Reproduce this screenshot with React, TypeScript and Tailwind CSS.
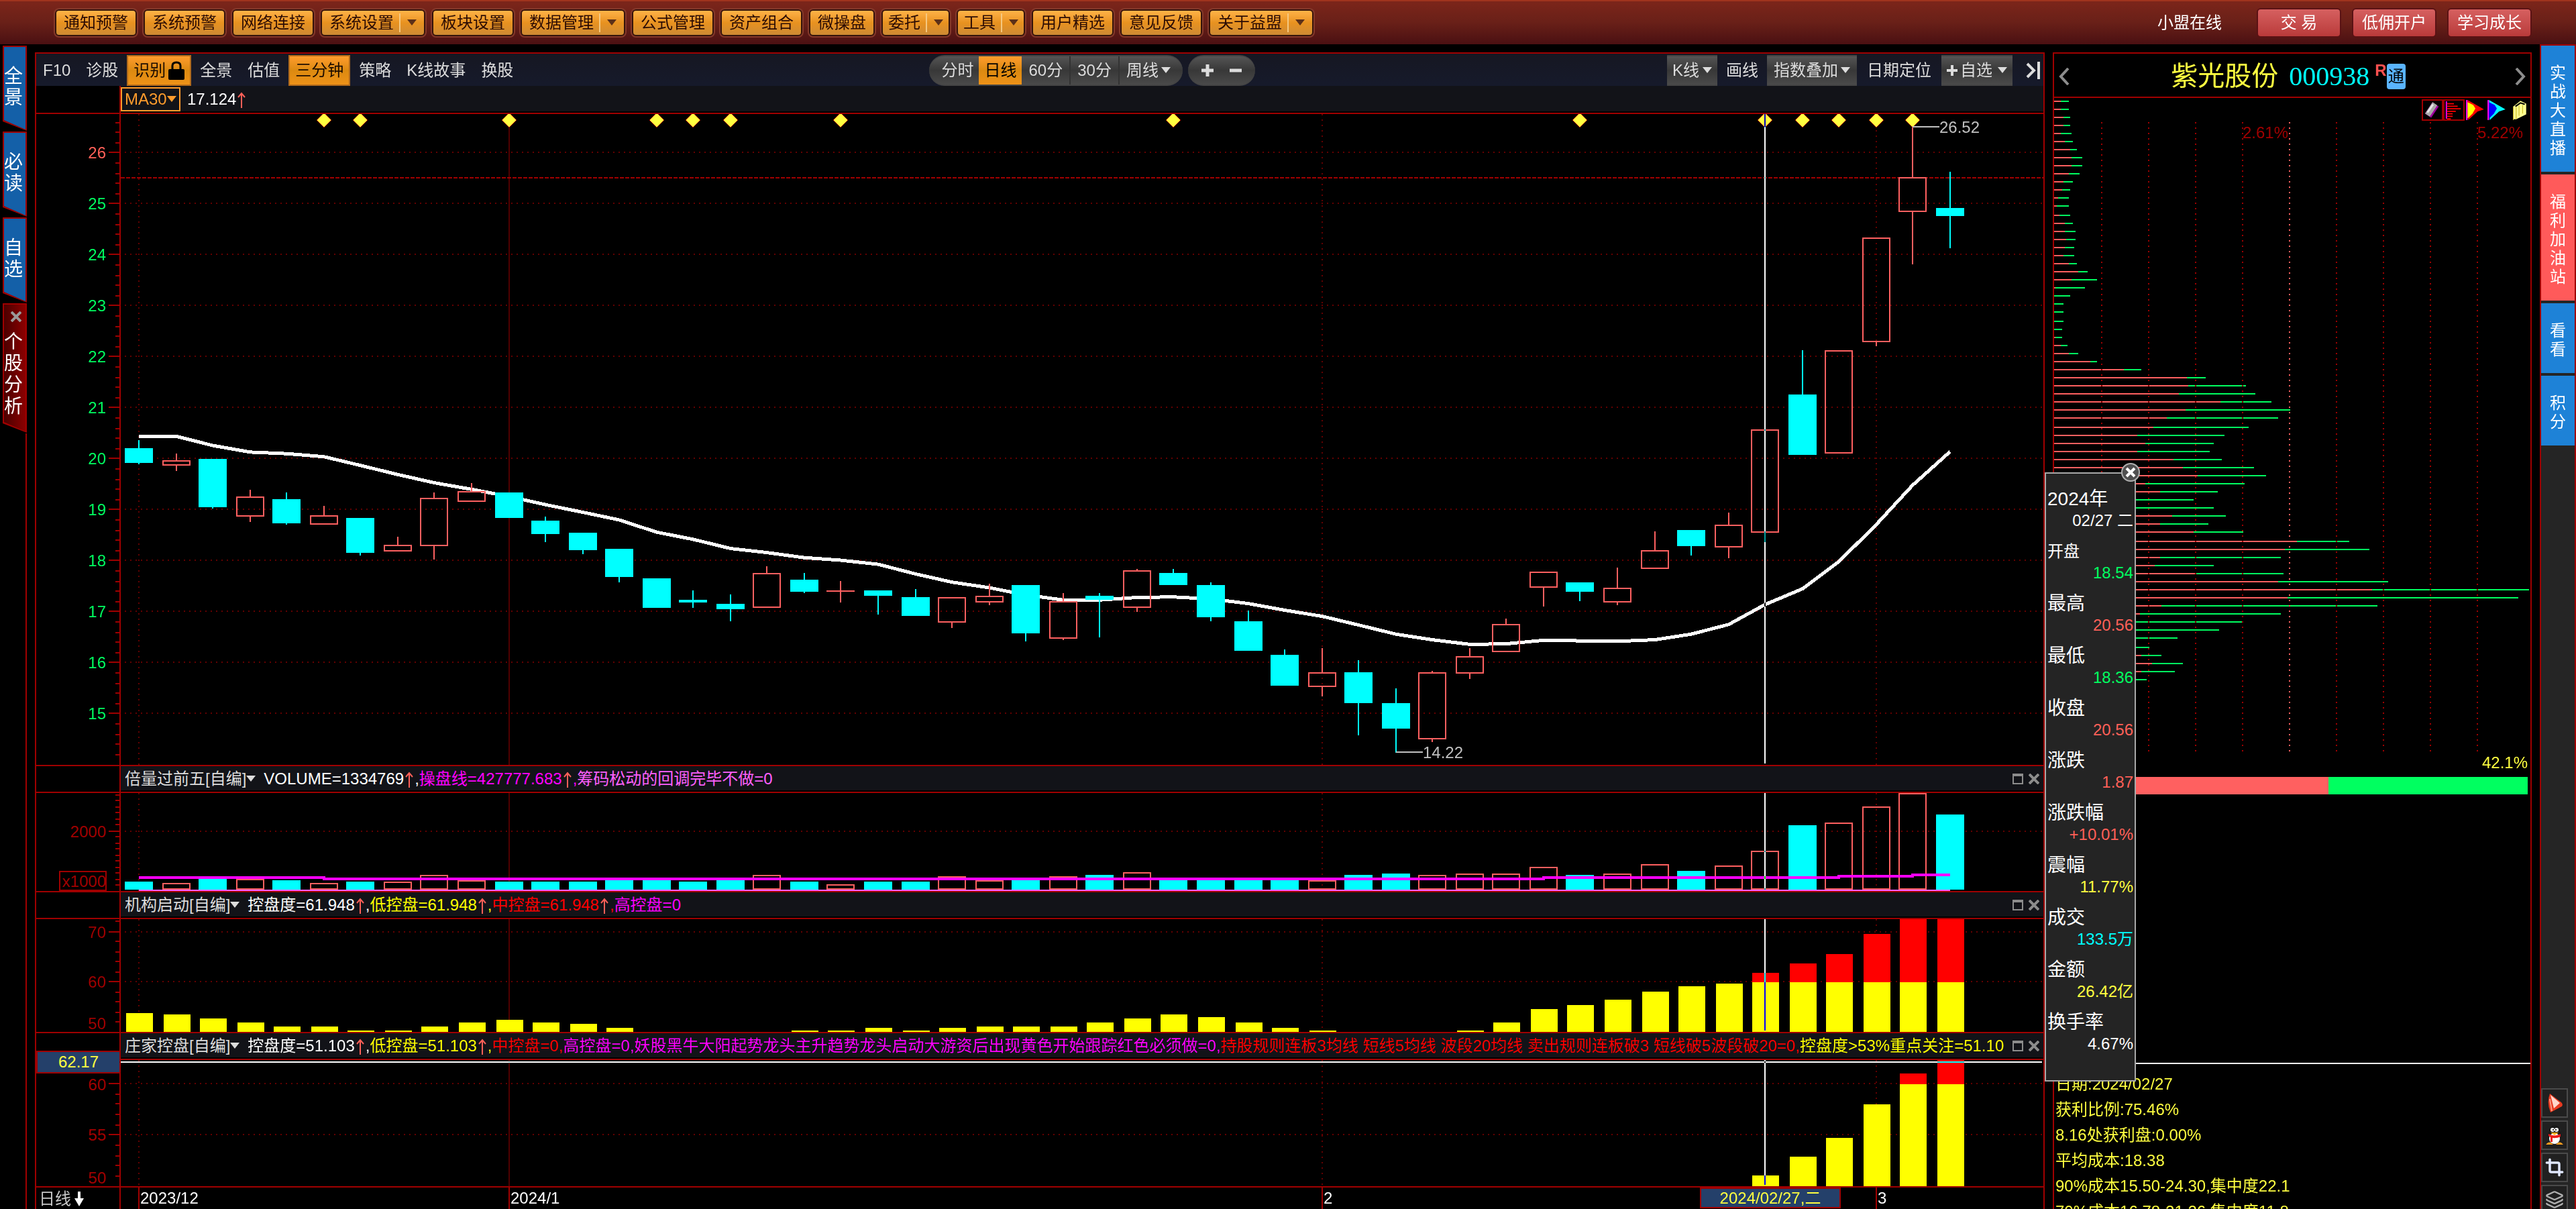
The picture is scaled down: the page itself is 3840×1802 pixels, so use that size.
import { FC, ReactNode } from "react";
import clsx from "clsx";
import { Crop, Layers } from "lucide-react";

type Candle = [high: number, top: number, bottom: number, low: number, up: 0 | 1];

const candles: Candle[] = [
  [20.35, 20.2, 19.91, 19.88, 0],
  [20.09, 19.95, 19.86, 19.75, 1],
  [19.99, 19.99, 19.04, 19.02, 0],
  [19.38, 19.25, 18.86, 18.75, 1],
  [19.33, 19.2, 18.72, 18.7, 0],
  [19.07, 18.88, 18.7, 18.7, 1],
  [18.83, 18.83, 18.15, 18.09, 0],
  [18.46, 18.3, 18.17, 18.17, 1],
  [19.33, 19.22, 18.28, 18.01, 1],
  [19.51, 19.35, 19.15, 19.15, 1],
  [19.33, 19.33, 18.83, 18.83, 0],
  [18.86, 18.78, 18.51, 18.36, 0],
  [18.54, 18.54, 18.2, 18.12, 0],
  [18.23, 18.23, 17.67, 17.57, 0],
  [17.64, 17.64, 17.06, 17.06, 0],
  [17.41, 17.22, 17.17, 17.06, 0],
  [17.33, 17.14, 17.04, 16.8, 0],
  [17.88, 17.75, 17.06, 17.06, 1],
  [17.75, 17.62, 17.38, 17.36, 0],
  [17.59, 17.4, 17.38, 17.17, 1],
  [17.41, 17.41, 17.3, 16.93, 0],
  [17.44, 17.28, 16.91, 16.91, 0],
  [17.27, 17.27, 16.78, 16.67, 1],
  [17.54, 17.3, 17.17, 17.12, 1],
  [17.51, 17.51, 16.57, 16.41, 0],
  [17.36, 17.19, 16.46, 16.43, 1],
  [17.36, 17.3, 17.22, 16.49, 0],
  [17.83, 17.8, 17.06, 16.98, 1],
  [17.83, 17.75, 17.51, 17.51, 0],
  [17.57, 17.51, 16.88, 16.8, 0],
  [17.01, 16.8, 16.22, 16.22, 0],
  [16.25, 16.14, 15.54, 15.54, 0],
  [16.28, 15.8, 15.51, 15.33, 1],
  [16.04, 15.8, 15.2, 14.56, 0],
  [15.49, 15.2, 14.7, 14.22, 0],
  [15.83, 15.8, 14.49, 14.43, 1],
  [16.28, 16.12, 15.78, 15.67, 1],
  [16.85, 16.75, 16.2, 16.2, 1],
  [17.77, 17.77, 17.46, 17.09, 1],
  [17.57, 17.57, 17.38, 17.2, 0],
  [17.85, 17.45, 17.17, 17.12, 1],
  [18.56, 18.19, 17.84, 17.84, 1],
  [18.59, 18.59, 18.28, 18.09, 0],
  [18.94, 18.69, 18.25, 18.04, 1],
  [20.56, 20.56, 18.54, 18.36, 1],
  [22.13, 21.25, 20.06, 20.06, 0],
  [22.11, 22.11, 20.1, 20.1, 1],
  [24.32, 24.32, 22.28, 22.2, 1],
  [26.52, 25.51, 24.83, 23.8, 1],
  [25.62, 24.91, 24.75, 24.12, 0]
];

const ma30 = [
  20.43, 20.43, 20.25, 20.12, 20.09, 20.03, 19.86, 19.68, 19.52, 19.39, 19.25,
  19.09, 18.94, 18.79, 18.55, 18.41, 18.23, 18.15, 18.05, 18.0, 17.92, 17.73,
  17.57, 17.46, 17.32, 17.22, 17.22, 17.27, 17.28, 17.24, 17.15, 17.02, 16.9,
  16.73, 16.55, 16.44, 16.35, 16.36, 16.43, 16.42, 16.41, 16.44, 16.55, 16.74,
  17.13, 17.44, 17.97, 18.7, 19.47, 20.13
];

const volumes = [
  318, 270, 404, 404, 356, 270, 318, 318, 539, 366, 318, 318, 318, 356, 356,
  318, 356, 539, 318, 221, 318, 318, 491, 340, 356, 491, 539, 626, 356, 356,
  356, 356, 366, 539, 587, 539, 587, 587, 809, 539, 587, 895, 674, 857, 1334,
  2205, 2292, 2831, 3290, 2562
];

const launch = [
  53.9, 53.6, 52.6, 52, 51.2, 51, 50.4, 50.2, 51, 52, 52.3, 51.8, 51.5, 50.7,
  0, 0, 0, 0, 50.2, 50.4, 50.7, 50.4, 50.7, 51.2, 51, 51.2, 51.8, 52.8, 53.4,
  53.1, 52, 50.7, 50.2, 0, 0, 0, 50.2, 51.8, 54.7, 55.5, 56.4, 58, 59.1, 59.6,
  62, 63.9, 65.8, 69.6, 74, 74
];

const control = volumes.map((_, i) =>
  i < 44 ? 0 : [51.1, 52.9, 54.8, 58, 61, 64][i - 44]
);

const signals = [5, 6, 10, 14, 15, 16, 19, 28, 39, 44, 45, 46, 47, 48];

// profit / total length of every price level, top to bottom
const chips = [
  [10, 22], [10, 22], [14, 24], [14, 24], [10, 26], [16, 28], [24, 34],
  [26, 42], [26, 42], [22, 38], [14, 28], [12, 24], [6, 22], [4, 22], [8, 24],
  [16, 28], [16, 32], [18, 32], [16, 30], [14, 30], [22, 34], [36, 50],
  [26, 64], [2, 46], [0, 24], [0, 14], [0, 14], [0, 14], [0, 12], [2, 12],
  [10, 20], [22, 36], [54, 64], [104, 130], [198, 226], [200, 286], [186, 300],
  [248, 324], [196, 352], [168, 334], [148, 290], [124, 254], [136, 238],
  [124, 232], [178, 250], [192, 298], [214, 316], [136, 284], [158, 244],
  [100, 208], [100, 238], [176, 256], [158, 230], [208, 282], [362, 440],
  [344, 470], [158, 338], [150, 238], [212, 342], [334, 498], [474, 708],
  [348, 692], [160, 482], [128, 338], [110, 280], [110, 246], [100, 184],
  [90, 142], [130, 160], [146, 192], [130, 180], [80, 138]
];

const months = [
  { i: 0, label: "2023/12" },
  { i: 10, label: "2024/1", solid: true },
  { i: 32, label: "2" },
  { i: 47, label: "3" }
];

const CHART_W = 2992;
const AXIS = 125;
const CURSOR = 44;

const even = (n: number) => 2 * Math.round(n / 2);
const cx = (i: number) => 153 + even(55.1 * i);

interface MenuItem {
  label: string;
  menu?: boolean;
}

const menuItems: MenuItem[] = [
  { label: "通知预警" },
  { label: "系统预警" },
  { label: "网络连接" },
  { label: "系统设置", menu: true },
  { label: "板块设置" },
  { label: "数据管理", menu: true },
  { label: "公式管理" },
  { label: "资产组合" },
  { label: "微操盘" },
  { label: "委托", menu: true },
  { label: "工具", menu: true },
  { label: "用户精选" },
  { label: "意见反馈" },
  { label: "关于益盟", menu: true }
];

const Triangle: FC<{ className?: string }> = ({ className }) => (
  <svg viewBox="0 0 14 10" className={clsx("h-2.5 w-3.5 shrink-0", className)} aria-hidden>
    <path d="M0 0h14l-7 9z" fill="currentColor" />
  </svg>
);

const TopBar: FC = () => (
  <header className="flex h-[66px] shrink-0 items-center justify-between border-t-2 border-[#a0341e] bg-linear-to-b from-[#7c251a] via-[#692018] to-[#4a1012] pr-[66px] pl-[82px]">
    <nav className="flex gap-2.5">
      {menuItems.map(({ label, menu }) => (
        <button
          key={label}
          className={clsx(
            "flex h-10 items-center rounded-md border-2 border-[#35140a] bg-linear-to-b from-[#ffb347] via-[#e8921f] to-[#cd8a33] text-[#2a0b04] outline-2 outline-[#84382a]",
            label.length === 2 ? "px-2" : "px-[11px]"
          )}
          aria-haspopup={menu ? "menu" : undefined}
        >
          {label}
          {menu && (
            <>
              <span className="ml-2 h-7 w-0.5 bg-[#f5c880]" />
              <Triangle className="ml-2.5 text-[#5c3018]" />
            </>
          )}
        </button>
      ))}
    </nav>
    <div className="flex items-center gap-4">
      <a href="#online" className="mr-9 text-white">
        小盟在线
      </a>
      {["交 易", "低佣开户", "学习成长"].map((label) => (
        <button
          key={label}
          className="h-[44px] w-[126px] rounded-md border-2 border-[#5a1214] bg-linear-to-b from-[#d66060] to-[#b93a3a] text-white"
        >
          {label}
        </button>
      ))}
    </div>
  </header>
);

const slant =
  "[clip-path:polygon(0_0,100%_0,100%_100%,0_calc(100%-14px))]";

const LeftTabs: FC = () => (
  <aside className="flex w-10 shrink-0 flex-col gap-px pt-0.5 pl-1">
    {["全景", "必读", "自选"].map((label) => (
      <button key={label} className={clsx("h-[127px] bg-[#a00000] p-0.5", slant)}>
        <span className={clsx("flex h-full justify-center bg-[#1460a8] pt-7 text-[28px] leading-8 text-white", slant)}>
          <span className="-ml-1 w-7 break-all">{label}</span>
        </span>
      </button>
    ))}
    <div className={clsx("h-[193px] bg-[#a00000] p-0.5", slant)}>
      <div className={clsx("flex h-full flex-col items-center bg-linear-to-r from-[#4c0000] to-[#8c0000] pt-2.5", slant)}>
        <button aria-label="关闭" className="pl-1 text-[#9a9a9a]">
          <svg viewBox="0 0 16 16" className="size-4">
            <path d="M1 1l14 14M15 1L1 15" stroke="currentColor" strokeWidth="4" />
          </svg>
        </button>
        <button className="mt-3.5 -ml-1 w-7 text-[28px] leading-8 break-all text-white">
          个股分析
        </button>
      </div>
    </div>
    <div className="ml-auto w-0.5 flex-1 bg-[#a00000]" />
  </aside>
);

interface DropdownProps {
  label: string;
  options: string[];
  className?: string;
}

const Dropdown: FC<DropdownProps> = ({ label, options, className }) => (
  <label className={clsx("flex h-full items-center gap-1", className)}>
    <select aria-label={label} className="appearance-none bg-transparent outline-none">
      {options.map((option) => (
        <option key={option}>{option}</option>
      ))}
    </select>
    <Triangle />
  </label>
);

const raised = "bg-linear-to-b from-[#555] via-[#383838] to-[#4a4a4a] border-y-2 border-[#444]";
const active = "border-2 border-[#b06a1c] bg-linear-to-b from-[#ff9c2c] via-[#dc8a10] to-[#ee9218] text-[#1c0c00]";

const Toolbar: FC = () => (
  <div className="flex h-12 items-stretch justify-between bg-linear-to-b from-[#161722] to-[#161a2b] pt-0.5 text-[#dcdcdc]">
    <div className="flex gap-[3px]">
      <button className="px-2.5">F10</button>
      <button className="px-2.5">诊股</button>
      <button className={clsx("flex items-center gap-1 px-2", active)}>
        识别
        <svg viewBox="0 0 24 28" className="h-7 w-6" aria-hidden>
          <path d="M6 13V7q0-5 6-5t6 5v6" fill="none" stroke="#000" strokeWidth="3" />
          <rect x="0" y="12" width="24" height="16" rx="2" fill="#000" />
        </svg>
      </button>
      <button className="px-2.5">全景</button>
      <button className="px-2.5">估值</button>
      <button className={clsx("px-2", active)}>三分钟</button>
      <button className="px-2.5">策略</button>
      <button className="px-2.5">K线故事</button>
      <button className="px-2.5">换股</button>
    </div>
    <div className="flex gap-2 pr-1">
      <div className={clsx("flex overflow-hidden rounded-full", raised)}>
        <button className="pr-2 pl-[18px]">分时</button>
        <button className="bg-linear-to-b from-[#ff9c2c] via-[#dc8a10] to-[#ee9218] px-2 text-black">
          日线
        </button>
        <button className="border-r-2 border-[#333] px-2.5">60分</button>
        <button className="border-r-2 border-[#333] px-2.5">30分</button>
        <Dropdown label="周期" options={["周线"]} className="pr-[18px] pl-2.5" />
      </div>
      <div className={clsx("flex items-center rounded-full px-5", raised)}>
        <button aria-label="放大" className="pr-3">
          <svg viewBox="0 0 18 18" className="size-[18px]">
            <path d="M9 0v18M0 9h18" stroke="currentColor" strokeWidth="5" />
          </svg>
        </button>
        <button aria-label="缩小" className="pl-3">
          <svg viewBox="0 0 18 18" className="size-[18px]">
            <path d="M0 9h18" stroke="currentColor" strokeWidth="5" />
          </svg>
        </button>
      </div>
    </div>
    <div className="flex items-stretch pr-1">
      <Dropdown label="图形" options={["K线"]} className={clsx("px-2", raised)} />
      <button className="px-[13px]">画线</button>
      <Dropdown label="叠加" options={["指数叠加"]} className={clsx("px-2.5", raised)} />
      <button className="px-[15px]">日期定位</button>
      <button className={clsx("flex items-center gap-1 px-2", raised)}>
        <svg viewBox="0 0 16 16" className="size-4" aria-hidden>
          <path d="M8 0v16M0 8h16" stroke="currentColor" strokeWidth="4" />
        </svg>
        自选
        <Triangle className="ml-1" />
      </button>
      <button aria-label="收起" className="pl-5">
        <svg viewBox="0 0 22 26" className="h-[26px] w-[22px]">
          <path d="M2 3l10 10L2 23M19 0v26" fill="none" stroke="currentColor" strokeWidth="4" />
        </svg>
      </button>
    </div>
  </div>
);

const Up: FC = () => (
  <svg viewBox="0 0 16 24" className="inline-block h-6 w-4 align-[-5px]" role="img" aria-label="↑">
    <path d="M8 24V2M3 8l5-6 5 6" fill="none" stroke="#ff6058" strokeWidth="2" />
  </svg>
);

const IndicatorBar: FC<{ title: string; children: ReactNode }> = ({ title, children }) => (
  <div className="flex h-[42px] border-y-2 border-[#a00000]">
    <div className="w-[126px] shrink-0 border-r-2 border-[#a00000]" />
    <div className="flex h-9 min-w-0 flex-1 items-center bg-[#121318] px-1.5 pt-0.5">
      <button className="flex shrink-0 items-center text-[#dcdcdc]">
        {title}
        <Triangle className="mr-3" />
      </button>
      <div className="min-w-0 flex-1 overflow-hidden whitespace-nowrap">{children}</div>
      <div className="flex shrink-0 items-center gap-2 text-[#8c8c8c]">
        <button aria-label="最大化" className="h-4 w-4 border-2 border-t-4 border-current" />
        <button aria-label="关闭">
          <svg viewBox="0 0 16 16" className="size-4">
            <path d="M1 1l14 14M15 1L1 15" stroke="currentColor" strokeWidth="4" />
          </svg>
        </button>
      </div>
    </div>
  </div>
);

interface FrameProps {
  height: number;
  className: string;
  title: string;
  majors: number[];
  minors: number[];
  children: ReactNode;
}

// shared axis, grid, month lines and the vertical cursor of one chart pane
const Frame: FC<FrameProps> = ({ height, className, title, majors, minors, children }) => (
  <svg
    viewBox={`0 0 ${CHART_W} ${height}`}
    preserveAspectRatio="xMinYMin slice"
    className={clsx("block w-full overflow-hidden bg-black", className)}
    role="img"
    aria-label={title}
    shapeRendering="crispEdges"
  >
    {majors.map((y) => (
      <g key={y} strokeWidth="2">
        <path d={`M132 ${y}H${CHART_W}`} stroke="#640000" strokeDasharray="2 6" />
        <path d={`M108 ${y}H124`} stroke="#a00000" />
      </g>
    ))}
    {minors.map((y) => (
      <path key={y} d={`M118 ${y}H124`} stroke="#a00000" strokeWidth="2" />
    ))}
    {months.map(({ i, solid }) => (
      <path
        key={i}
        d={`M${cx(i)} 0V${height}`}
        stroke={solid ? "#500000" : "#640000"}
        strokeWidth="2"
        strokeDasharray={solid ? undefined : "2 6"}
      />
    ))}
    <path d={`M${AXIS} 0V${height}`} stroke="#a00000" strokeWidth="2" />
    {children}
    <rect
      x={cx(CURSOR) - 1}
      y="0"
      width="2"
      height={height - 2}
      fill="#fff"
      className="mix-blend-difference"
    />
  </svg>
);

const AxisText: FC<{ y: number; fill?: string; children: ReactNode }> = ({
  y,
  fill = "#a00000",
  children
}) => (
  <text x="104" y={y + 9} textAnchor="end" fill={fill} fontSize="24">
    {children}
  </text>
);

const priceY = (p: number) => 57 + (26 - p) * 76;

const PriceChart: FC = () => {
  const prices = Array.from({ length: 12 }, (_, i) => 26 - i);
  const minors = Array.from({ length: 64 }, (_, i) => 26.6 - i * 0.2)
    .filter((p) => Math.abs(p - Math.round(p)) > 0.05)
    .map((p) => even(priceY(p)) + 1)
    .filter((y) => y < 966);

  return (
    <Frame
      height={970}
      className="h-[970px]"
      title="紫光股份 日线"
      majors={prices.map(priceY)}
      minors={minors}
    >
      {prices.map((p) => (
        <AxisText key={p} y={priceY(p)} fill={p === 26 ? "#ff6058" : "#00ff60"}>
          {p}
        </AxisText>
      ))}
      <path d={`M126 95H${CHART_W}`} stroke="#a00000" strokeWidth="2" strokeDasharray="6 2" />
      <polyline
        points={ma30.map((p, i) => `${cx(i)},${priceY(p)}`).join(" ")}
        fill="none"
        stroke="#fff"
        strokeWidth="5"
      />
      {candles.map(([high, top, bottom, low, up], i) => {
        const x = cx(i);
        const color = up ? "#ff6060" : "#00ffff";
        const [h, t, b, l] = [high, top, bottom, low].map((p) => even(priceY(p)));
        const size = Math.max(b - t, 2);
        return (
          <g key={i}>
            <path d={`M${x} ${h}V${t}M${x} ${b}V${l}`} stroke={color} strokeWidth="2" />
            {up && size > 2 ? (
              <rect x={x - 20} y={t + 1} width="40" height={size - 2} fill="none" stroke={color} strokeWidth="2" />
            ) : (
              <rect x={x - 21} y={t} width="42" height={size} fill={color} />
            )}
          </g>
        );
      })}
      {signals.map((i) => (
        <path
          key={i}
          d={`M${cx(i)} -2l11 11l-11 11l-11 -11z`}
          fill="#ffff40"
          stroke="#a00000"
          strokeWidth="1"
        />
      ))}
      <g stroke="#c0c0c0" strokeWidth="2">
        <path d={`M${cx(48)} 19h40`} />
        <path d={`M${cx(34)} 951h40`} />
      </g>
      <g fill="#c0c0c0" fontSize="24">
        <text x={cx(48) + 40} y="28">26.52</text>
        <text x={cx(34) + 40} y="960">14.22</text>
      </g>
    </Frame>
  );
};

const VolumeChart: FC = () => {
  const y = (v: number) => 146 - v * 0.0445;
  const line = [
    [0, 126],
    [5, 126],
    [5, 128],
    [38, 128],
    [38, 126],
    [46, 126],
    [46, 124],
    [48, 124],
    [48, 122],
    [49, 122]
  ];

  return (
    <Frame
      height={146}
      className="h-[146px]"
      title="成交量"
      majors={[57]}
      minors={[3, 11, 21, 29, 39, 47, 65, 75, 83, 93, 101, 111, 119, 129, 137]}
    >
      <AxisText y={57}>2000</AxisText>
      <rect x="35" y="117" width="69" height="28" fill="none" stroke="#a00000" strokeWidth="2" />
      <AxisText y={131}>x1000</AxisText>
      {volumes.map((v, i) => {
        const top = even(y(v));
        return candles[i][4] ? (
          <rect key={i} x={cx(i) - 20} y={top + 1} width="40" height={142 - top} fill="none" stroke="#ff6060" strokeWidth="2" />
        ) : (
          <rect key={i} x={cx(i) - 21} y={top} width="42" height={144 - top} fill="#00ffff" />
        );
      })}
      <path d={`M${cx(0)} 145H${cx(49)}`} stroke="#ff60ff" strokeWidth="2" />
      <polyline
        points={line.map(([i, v]) => `${cx(i)},${v}`).join(" ")}
        fill="none"
        stroke="#ff00ff"
        strokeWidth="4"
      />
    </Frame>
  );
};

interface StackProps {
  data: number[];
  y: (v: number) => number;
  base: number;
}

// yellow up to 60, red above it
const StackBars: FC<StackProps> = ({ data, y, base }) => (
  <>
    {data.map((v, i) => {
      if (!v) return null;
      const top = even(y(v));
      const mid = even(y(Math.min(v, 60)));
      return (
        <g key={i}>
          <rect x={cx(i) - 19} y={mid} width="40" height={base - mid} fill="#ffff00" />
          {v > 60 && <rect x={cx(i) - 19} y={top} width="40" height={mid - top} fill="#ff0000" />}
        </g>
      );
    })}
  </>
);

const LaunchChart: FC = () => (
  <Frame
    height={168}
    className="h-[168px]"
    title="机构启动"
    majors={[19, 93]}
    minors={[3, 33, 49, 63, 79, 109, 123, 139, 153]}
  >
    <AxisText y={19}>70</AxisText>
    <AxisText y={93}>60</AxisText>
    <AxisText y={155}>50</AxisText>
    <StackBars data={launch} y={(v) => 94 + (60 - v) * 7.4} base={168} />
  </Frame>
);

const ControlChart: FC = () => (
  <Frame
    height={188}
    className="h-[188px]"
    title="庄家控盘"
    majors={[35, 111]}
    minors={[51, 65, 81, 97, 127, 143, 157, 173]}
  >
    <AxisText y={36}>60</AxisText>
    <AxisText y={111}>55</AxisText>
    <AxisText y={175}>50</AxisText>
    <StackBars data={control} y={(v) => 36 + (60 - v) * 15.2} base={188} />
    <rect
      x="126"
      y="2"
      width={CHART_W - 128}
      height="2"
      fill="#fff"
      className="mix-blend-difference"
    />
  </Frame>
);

const DateAxis: FC = () => (
  <div className="flex h-[34px] border-t-2 border-[#a00000]">
    <svg
      viewBox={`0 0 ${CHART_W} 32`}
      preserveAspectRatio="xMinYMin slice"
      className="block h-8 w-full"
      role="img"
      aria-label="日期"
      fontSize="24"
    >
      <text x="4" y="25" fill="#c8c8c8">日线</text>
      <path d="M62 6h4v10h5l-7 12l-7-12h5z" fill="#fff" />
      <path d={`M${AXIS} 0V32`} stroke="#a00000" strokeWidth="2" />
      {months.map(({ i, label }) => (
        <g key={i}>
          <path d={`M${cx(i)} 0V32`} stroke="#a00000" strokeWidth="2" />
          <text x={cx(i) + 2} y="24" fill="#fff">
            {label}
          </text>
        </g>
      ))}
      <rect x="2481" y="1" width="208" height="29" fill="#24406a" stroke="#a00000" strokeWidth="2" />
      <text x="2585" y="24" fill="#ffff40" textAnchor="middle">
        2024/02/27,二
      </text>
    </svg>
  </div>
);

const ChartPanel: FC = () => (
  <main className="relative mt-3 ml-3 flex min-w-0 flex-1 flex-col border-2 border-b-0 border-[#a00000]">
    <Toolbar />
    <div className="flex h-[42px] border-b-2 border-[#a00000]">
      <div className="w-[126px] shrink-0 border-r-2 border-[#a00000]" />
      <div className="flex h-[38px] flex-1 items-center bg-[#121318]">
        <label className="mt-0.5 flex h-9 items-center border-2 border-[#ff9c2c] px-1 text-[#ff9c2c]">
          <select aria-label="均线" className="appearance-none bg-transparent outline-none">
            <option>MA30</option>
          </select>
          <Triangle />
        </label>
        <span className="ml-2.5 pt-0.5 text-white">
          17.124
          <Up />
        </span>
      </div>
    </div>
    <PriceChart />
    <IndicatorBar title="倍量过前五[自编]">
      <span className="text-white">VOLUME=1334769<Up />,</span>
      <span className="text-[#ff00ff]">操盘线=427777.683<Up />,</span>
      <span className="text-[#ff60ff]">筹码松动的回调完毕不做=0</span>
    </IndicatorBar>
    <VolumeChart />
    <IndicatorBar title="机构启动[自编]">
      <span className="text-white">控盘度=61.948<Up />,</span>
      <span className="text-[#ffff00]">低控盘=61.948<Up />,</span>
      <span className="text-[#ff0000]">中控盘=61.948<Up />,</span>
      <span className="text-[#ff00ff]">高控盘=0</span>
    </IndicatorBar>
    <LaunchChart />
    <IndicatorBar title="庄家控盘[自编]">
      <span className="text-white">控盘度=51.103<Up />,</span>
      <span className="text-[#ffff00]">低控盘=51.103<Up />,</span>
      <span className="text-[#ff0000]">中控盘=0,</span>
      <span className="text-[#ff00ff]">
        高控盘=0,妖股黑牛大阳起势龙头主升趋势龙头启动大游资后出现黄色开始跟踪红色必须做=0,
      </span>
      <span className="text-[#ff0000]">
        持股规则连板3均线 短线5均线 波段20均线 卖出规则连板破3 短线破5波段破20=0,
      </span>
      <span className="text-[#ffff00]">控盘度&gt;53%重点关注=51.10</span>
    </IndicatorBar>
    <div className="relative">
      <ControlChart />
      <div className="absolute -top-3.5 left-0 flex h-[34px] w-[126px] items-center justify-center border-2 border-[#a00000] bg-[#24406a] text-[#ffff40]">
        62.17
      </div>
    </div>
    <DateAxis />
  </main>
);

const chipTools: { label: string; icon: ReactNode; boxed?: boolean }[] = [
  {
    label: "筹码工具",
    boxed: true,
    icon: (
      <>
        <path d="M8 24L20 6" stroke="#a000a0" strokeWidth="12" />
        <path d="M7 23L19 5" stroke="#a8a8a8" strokeWidth="9" />
        <path d="M7 19L16 6" stroke="#e8e8e8" strokeWidth="3" />
      </>
    )
  },
  {
    label: "筹码分布",
    boxed: true,
    icon: (
      <>
        <path d="M3 1v28" stroke="#ff00ff" strokeWidth="2" />
        <path d="M4 5h11M4 9h17M4 13h22M4 17h14M4 21h9M4 25h9M4 29h6" stroke="#ff0000" strokeWidth="2" />
      </>
    )
  },
  {
    label: "红色筹码",
    icon: (
      <>
        <path d="M4 1l14 8 9 5-9 3L5 29z" fill="#ff0000" />
        <path d="M4 4l8 4 3 5-4 7-7 7z" fill="#ffff00" />
        <path d="M3 1v28" stroke="#ff00ff" strokeWidth="2" />
      </>
    )
  },
  {
    label: "蓝色筹码",
    icon: (
      <>
        <path d="M4 1l14 8 9 5-9 3L5 29z" fill="#00ffff" />
        <path d="M4 4l8 4 3 5-4 7-7 7z" fill="#0000ff" />
        <path d="M3 1v28" stroke="#ff00ff" strokeWidth="2" />
      </>
    )
  },
  {
    label: "设置",
    icon: (
      <>
        <path d="M8 10l10-8 8 4v15L12 28H8z" fill="#ffff90" />
        <path d="M8 10v19M12 11v17M16 9v14M21 8v12" stroke="#c8b820" strokeWidth="1" />
        <path d="M11 10l7-5 6 2" fill="none" stroke="#000" strokeWidth="2" />
      </>
    )
  }
];

const ChipPanel: FC = () => (
  <section className="relative mt-3 ml-3 flex w-[714px] shrink-0 flex-col border-2 border-b-0 border-[#a00000]">
    <div className="flex h-[66px] shrink-0 items-center justify-between border-b-2 border-[#a00000] px-1.5 pt-1 text-[#8c8c8c]">
      <button aria-label="上一只">
        <svg viewBox="0 0 18 26" className="h-[26px] w-[18px]">
          <path d="M15 1L4 13l11 12" fill="none" stroke="currentColor" strokeWidth="4" />
        </svg>
      </button>
      <h1 className="flex items-center pr-3 text-[40px]">
        <span className="text-[#ffff40]">紫光股份</span>
        <span className="ml-4 font-['Liberation_Serif',serif] text-[#00ffff]">000938</span>
        <span className="ml-2 flex items-start">
          <span className="text-2xl leading-5 font-bold text-[#ff5050]">R</span>
          <span className="flex h-[38px] w-7 items-center justify-center rounded-sm bg-[#5ab4ff] text-2xl text-black">
            通
          </span>
        </span>
      </h1>
      <button aria-label="下一只">
        <svg viewBox="0 0 18 26" className="h-[26px] w-[18px]">
          <path d="M3 1l11 12L3 25" fill="none" stroke="currentColor" strokeWidth="4" />
        </svg>
      </button>
    </div>
    <div className="absolute top-[68px] right-0.5 flex">
      {chipTools.map(({ label, icon, boxed }) => (
        <button
          key={label}
          aria-label={label}
          className={clsx("size-8", boxed && "border-2 border-[#a00000]")}
        >
          <svg viewBox="0 0 30 30" className="size-full">
            {icon}
          </svg>
        </button>
      ))}
    </div>
    <svg
      viewBox="0 0 710 976"
      preserveAspectRatio="xMinYMin slice"
      className="block h-[976px] w-full shrink-0"
      role="img"
      aria-label="筹码分布"
      shapeRendering="crispEdges"
    >
      {chips.map(([profit, total], i) => {
        const y = 7 + 2 * Math.floor((12.15 * i - 1.98) / 2);
        return (
          <g key={i} strokeWidth="2">
            <path d={`M0 ${y}H${total}`} stroke="#00ff60" />
            {profit > 0 && <path d={`M0 ${y}H${profit}`} stroke="#ff6060" />}
          </g>
        );
      })}
      {Array.from({ length: 9 }, (_, i) => (
        <path
          key={i}
          d={`M${71 + i * 70} 36V976`}
          stroke={i === 4 ? "#ff6060" : "#a00000"}
          strokeWidth="2"
          strokeDasharray="2 6"
        />
      ))}
      <g fill="#a00000" fontSize="24">
        <text x="281" y="60">2.61%</text>
        <text x="631" y="60">5.22%</text>
      </g>
    </svg>
    <p className="h-9 shrink-0 pr-1 text-right leading-[30px] text-[#ffff40]">42.1%</p>
    <div className="mr-1 flex h-[26px] shrink-0 bg-[#00ff60]">
      <div className="bg-[#ff6060]" style={{ width: "58%" }} />
    </div>
    <div className="mt-[400px] shrink-0 border-t-2 border-white px-0.5 pt-[11px] leading-[38px] whitespace-nowrap text-[#ffff40]">
      <p>日期:2024/02/27</p>
      <p>获利比例:75.46%</p>
      <p>8.16处获利盘:0.00%</p>
      <p>平均成本:18.38</p>
      <p>90%成本15.50-24.30,集中度22.1</p>
      <p>70%成本16.78-21.26,集中度11.8</p>
    </div>
    <QuoteCard />
  </section>
);

const quotes = [
  { label: "开盘", value: "18.54", color: "text-[#00ff60]" },
  { label: "最高", value: "20.56", color: "text-[#ff6058]" },
  { label: "最低", value: "18.36", color: "text-[#00ff60]" },
  { label: "收盘", value: "20.56", color: "text-[#ff6058]" },
  { label: "涨跌", value: "1.87", color: "text-[#ff6058]" },
  { label: "涨跌幅", value: "+10.01%", color: "text-[#ff6058]" },
  { label: "震幅", value: "11.77%", color: "text-[#ffff40]" },
  { label: "成交", value: "133.5万", color: "text-[#00ffff]" },
  { label: "金额", value: "26.42亿", color: "text-[#ffff40]" },
  { label: "换手率", value: "4.67%", color: "text-white" }
];

const QuoteCard: FC = () => (
  <div className="absolute top-[624px] -left-3.5 w-[136px] border-2 border-[#a8a8a8] bg-[#242424] px-0.5 pt-[22px] pb-6 text-white">
    <button aria-label="关闭" className="absolute -top-4 -right-2">
      <svg viewBox="0 0 28 28" className="block size-7">
        <circle cx="14" cy="14" r="13" fill="#505050" stroke="#b0b0b0" strokeWidth="2" />
        <path d="M8 8l12 12M20 8L8 20" stroke="#fff" strokeWidth="4" />
      </svg>
    </button>
    <p className="text-[28px] leading-8">2024年</p>
    <p className="text-right leading-8">02/27 二</p>
    <dl className="pt-3.5">
      {quotes.map(({ label, value, color }) => (
        <div key={label} className="h-[78px]">
          <dt
            className={clsx("leading-8", label === "开盘" ? "text-2xl" : "text-[28px]")}
          >
            {label}
          </dt>
          <dd className={clsx("text-right leading-8", color)}>{value}</dd>
        </div>
      ))}
    </dl>
  </div>
);

const sideTabs = [
  { label: "实战大直播", className: "h-[188px] bg-[#1e82d7]" },
  { label: "福利加油站", className: "h-[188px] bg-[#ff5a5a]" },
  { label: "看看", className: "h-[104px] bg-[#1e82d7]" },
  { label: "积分", className: "h-[104px] bg-[#1e82d7]" }
];

const sideTools: { label: string; icon: ReactNode }[] = [
  {
    label: "喇叭",
    icon: (
      <svg viewBox="0 0 28 28" className="size-7">
        <path d="M7 0l17 13q3 3 1 6L8 28Q2 14 7 0z" fill="#e83a20" />
        <path d="M8 2l14 12-9 8z" fill="#ffd8cc" />
        <path d="M7 8l3 18" stroke="#ff9c84" strokeWidth="2" />
      </svg>
    )
  },
  {
    label: "QQ",
    icon: (
      <svg viewBox="0 0 28 30" className="h-[30px] w-7">
        <ellipse cx="14" cy="16" rx="10" ry="11" fill="#181818" />
        <ellipse cx="14" cy="8" rx="8" ry="8" fill="#181818" />
        <ellipse cx="14" cy="20" rx="8" ry="8" fill="#fff" />
        <circle cx="11" cy="7" r="3" fill="#fff" />
        <circle cx="17" cy="7" r="3" fill="#fff" />
        <circle cx="12" cy="7" r="1" fill="#000" />
        <circle cx="16" cy="7" r="1" fill="#000" />
        <path d="M8 11h12l-6 4z" fill="#ffb020" />
        <path d="M5 13q9 5 18 0v4q-6 3-12 2v6H8v-7l-3-2z" fill="#e81818" />
        <path d="M1 29q5-7 11 0zM16 29q6-7 11 0z" fill="#ffa020" />
      </svg>
    )
  },
  { label: "截图", icon: <Crop className="size-7 text-[#e0e8ff]" strokeWidth={3} /> },
  { label: "更多", icon: <Layers className="size-7 text-[#b0b0b0]" /> }
];

const RightTabs: FC = () => (
  <aside className="ml-3 flex w-[54px] shrink-0 flex-col justify-between border-2 border-b-0 border-[#a00000] bg-[#252525]">
    <div className="flex flex-col gap-1">
      {sideTabs.map(({ label, className }) => (
        <button
          key={label}
          className={clsx("flex items-center justify-center pt-1.5 leading-7 text-white", className)}
        >
          <span className="w-6 break-all">{label}</span>
        </button>
      ))}
    </div>
    <div className="-mb-2 flex flex-col gap-1">
      {sideTools.map(({ label, icon }) => (
        <button
          key={label}
          aria-label={label}
          className="flex h-11 w-10 items-center justify-center border-2 border-[#4a4a4a] bg-[#202020]"
        >
          {icon}
        </button>
      ))}
    </div>
  </aside>
);

const App: FC = () => (
  <div className="flex h-screen flex-col overflow-hidden bg-black font-['Liberation_Sans','Noto_Sans_CJK_SC',sans-serif] text-2xl">
    <TopBar />
    <div className="flex min-h-0 flex-1">
      <LeftTabs />
      <ChartPanel />
      <ChipPanel />
      <RightTabs />
    </div>
  </div>
);

export default App;
